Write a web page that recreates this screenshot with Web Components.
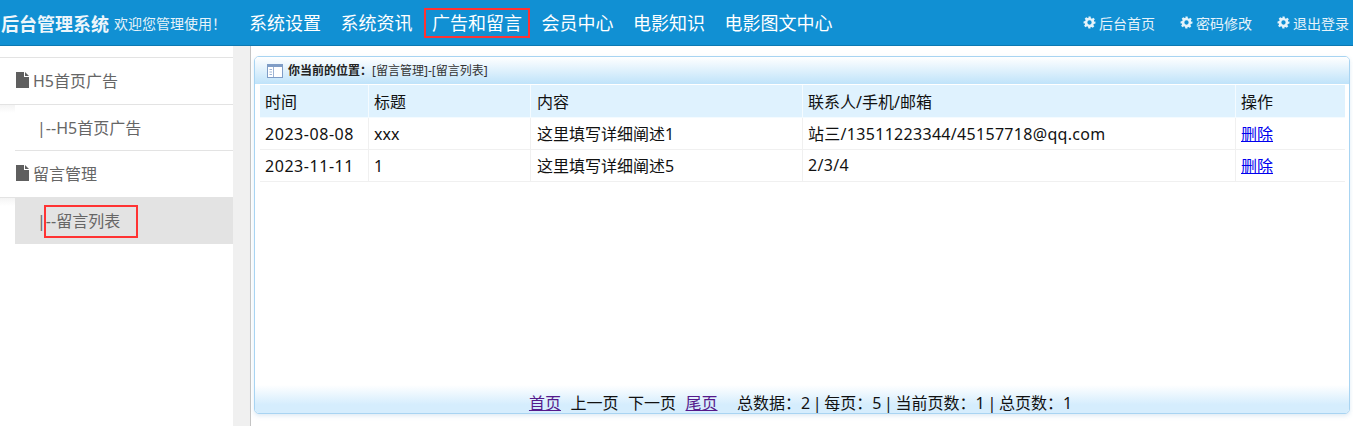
<!DOCTYPE html>
<html lang="zh">
<head>
<meta charset="utf-8">
<title>后台管理系统</title>
<style>
  html, body { margin: 0; height: 100%; }
  body { font-family: "Noto Sans", "Noto Sans CJK SC", sans-serif; overflow: hidden; }
  admin-app { height: 426px; }
</style>
</head>
<body>
<admin-app>
  <top-bar slot="top">
    <nav-link>系统设置</nav-link>
    <nav-link>系统资讯</nav-link>
    <nav-link marked>广告和留言</nav-link>
    <nav-link>会员中心</nav-link>
    <nav-link>电影知识</nav-link>
    <nav-link>电影图文中心</nav-link>
    <tool-link slot="tools">后台首页</tool-link>
    <tool-link slot="tools">密码修改</tool-link>
    <tool-link slot="tools">退出登录</tool-link>
  </top-bar>
  <side-menu slot="side">
    <menu-group>H5首页广告</menu-group>
    <menu-item>H5首页广告</menu-item>
    <menu-group>留言管理</menu-group>
    <menu-item active>留言列表</menu-item>
  </side-menu>
  <list-panel slot="main" where="[留言管理]-[留言列表]">
    <message-table></message-table>
    <page-bar slot="footer"></page-bar>
  </list-panel>
</admin-app>

<script>
class AdminApp extends HTMLElement {
  constructor() {
    super();
    this.attachShadow({ mode: "open" }).innerHTML = `
      <style>
        :host { display: grid; grid-template-rows: 46px 1fr; grid-template-columns: 233px 18px 1fr; background: #fff; }
        .top { grid-column: 1 / -1; }
        .gutter { background: #f0f0f0; border-right: 1px solid #c4c4c4; box-sizing: border-box; }
      </style>
      <div class="top"><slot name="top"></slot></div>
      <slot name="side"></slot>
      <div class="gutter"></div>
      <slot name="main"></slot>`;
  }
}

class TopBar extends HTMLElement {
  constructor() {
    super();
    this.attachShadow({ mode: "open" }).innerHTML = `
      <style>
        :host { display: flex; align-items: center; height: 46px; box-sizing: border-box; background: #1190d3; border-bottom: 1px solid #0d79b2; color: #fff; white-space: nowrap; }
        .brand { font-size: 18px; font-weight: 700; color: #eef6fb; width: 114px; padding-left: 1px; box-sizing: border-box; }
        .hello { font-size: 14px; color: #e6f3fa; width: 135px; }
        .nav { display: flex; gap: 19.500px; }
        .tools { display: flex; gap: 25px; margin-left: auto; margin-right: 5px; }
      </style>
      <span class="brand">后台管理系统</span>
      <span class="hello">欢迎您管理使用！</span>
      <div class="nav"><slot></slot></div>
      <div class="tools"><slot name="tools"></slot></div>`;
  }
}

class NavLink extends HTMLElement {
  constructor() {
    super();
    this.attachShadow({ mode: "open" }).innerHTML = `
      <style>
        :host { display: block; position: relative; font-size: 18px; line-height: 30px; color: #fff; }
        :host([marked])::after { content: ""; position: absolute; left: -8px; right: -8px; top: 0; bottom: 0; border: 2px solid #f33; }
      </style>
      <slot></slot>`;
  }
}

class ToolLink extends HTMLElement {
  constructor() {
    super();
    this.attachShadow({ mode: "open" }).innerHTML = `
      <style>
        :host { display: flex; align-items: center; gap: 3px; font-size: 14px; color: #e6f3fa; }
        svg { width: 13px; height: 13px; fill: #e6f3fa; }
      </style>
      <svg viewBox="0 0 24 24"><path fill-rule="evenodd" d="M10 1h4l.6 3.1 1.9.8 2.6-1.8 2.8 2.8-1.8 2.6.8 1.9L23 10v4l-3.1.6-.8 1.9 1.8 2.6-2.8 2.8-2.6-1.8-1.9.8L13.9 23h-4l-.6-3.1-1.9-.8-2.6 1.8-2.8-2.8 1.8-2.6-.8-1.9L1 14v-4l3.1-.6.8-1.9-1.8-2.6 2.8-2.8 2.6 1.8 1.9-.8zM12 8a4 4 0 1 0 0 8 4 4 0 0 0 0-8z"/></svg>
      <slot></slot>`;
  }
}

class SideMenu extends HTMLElement {
  constructor() {
    super();
    this.attachShadow({ mode: "open" }).innerHTML = `
      <style>
        :host { display: block; padding-top: 11px; background: #fff; }
        .list { border-top: 1px solid #e3e3e3; }
      </style>
      <div class="list"><slot></slot></div>`;
  }
}

class MenuGroup extends HTMLElement {
  constructor() {
    super();
    this.attachShadow({ mode: "open" }).innerHTML = `
      <style>
        :host { display: flex; align-items: center; gap: 3px; height: 46px; padding-left: 15px; border-bottom: 1px solid #e3e3e3; font-size: 16px; color: #666; }
        span { margin-top: -2px; }
        svg { width: 15px; height: 16px; fill: #5f5f5f; margin-top: -2px; }
      </style>
      <svg viewBox="0 0 15 16"><path d="M1 0h8v5h5v11H1zM10 0l4 4h-4z"/></svg>
      <span><slot></slot></span>`;
  }
}

class MenuItem extends HTMLElement {
  constructor() {
    super();
    this.attachShadow({ mode: "open" }).innerHTML = `
      <style>
        :host { display: flex; align-items: center; height: 44px; padding-bottom: 1px; margin-left: 15px; padding-left: 22px; border-bottom: 1px solid #e3e3e3; font-size: 16px; color: #666; position: relative; }
        :host::before { content: ""; position: absolute; left: -15px; top: 0; width: 15px; height: 8px; background: linear-gradient(#f4f4f4, #fff); }
        :host([active]) { background: #e3e3e3; }
        :host([active])::after { content: ""; position: absolute; left: 29px; top: 7px; width: 90px; height: 29px; border: 2px solid #f33; }
      </style>
      |--<slot></slot>`;
  }
}

class ListPanel extends HTMLElement {
  static get observedAttributes() { return ["where"]; }
  constructor() {
    super();
    this.attachShadow({ mode: "open" }).innerHTML = `
      <style>
        :host { display: block; padding: 10px 4px 12px 3px; height: 380px; box-sizing: border-box; }
        .box { height: 358px; box-sizing: border-box; display: flex; flex-direction: column; border: 1px solid #a8d4f2; border-radius: 5px; box-shadow: 0 2px 4px rgba(150,190,220,.3); background: #fff; }
        .head { display: flex; align-items: center; gap: 5px; height: 27px; padding-left: 12px; font-size: 12px; color: #333; background: linear-gradient(#fff, #bfe3fa); border-radius: 4px 4px 0 0; }
        .head b { font-weight: 700; color: #222; margin-right: -5px; margin-top: -1px; }
        .head span { margin-top: -1px; }
        .head svg { width: 16px; height: 14px; }
        .body { flex: 1; padding: 1px 4px 0 5px; }
        .foot { height: 28px; background: linear-gradient(#fff, #d5edfd 70%); border-radius: 0 0 4px 4px; }
      </style>
      <div class="box">
        <div class="head">
          <svg viewBox="0 0 16 14"><rect x=".5" y=".5" width="15" height="13" fill="#fff" stroke="#7f9dc6"/><rect x="1" y="1" width="14" height="2" fill="#7f9dc6"/><rect x="6" y="3" width="1" height="10" fill="#9db4d4"/><path d="M2.500 5.500h2.500M2.500 8h2.500M2.500 10.500h2.500" stroke="#9db4d4" fill="none"/></svg>
          <b>你当前的位置：</b><span id="where"></span>
        </div>
        <div class="body"><slot></slot></div>
        <div class="foot"><slot name="footer"></slot></div>
      </div>`;
  }
  attributeChangedCallback(name, oldValue, newValue) {
    this.shadowRoot.querySelector("#where").textContent = newValue;
  }
}

const rows = [
  ["2023-08-08", "xxx", "这里填写详细阐述1", "站三/13511223344/45157718@qq.com"],
  ["2023-11-11", "1", "这里填写详细阐述5", "2/3/4"]
];

class MessageTable extends HTMLElement {
  constructor() {
    super();
    this.attachShadow({ mode: "open" }).innerHTML = `
      <style>
        :host { display: block; font-size: 16px; color: #111; }
        .row { display: grid; grid-template-columns: 109px 162px 272px 433px 109px; height: 32px; border-bottom: 1px solid #f0f0f0; box-sizing: border-box; }
        .row.th { background: #dff2fe; border-bottom: 1px solid #f4fbff; height: 33px; }
        .row > * { display: flex; align-items: center; padding-left: 5px; border-right: 1px solid #f0f0f0; white-space: nowrap; }
        .row.th > * { border-right-color: #f4fbff; }
        .row > :nth-child(3) { padding-left: 6px; }
        .row > .op { border-right: 0; }
        .row:not(.th) > :nth-child(1) { letter-spacing: .55px; }
        .row:not(.th) > :nth-child(4) { letter-spacing: .3px; }
        .row:not(.th) > :nth-child(n+3) { padding-bottom: 1px; }
        a { color: #00e; text-decoration: underline; }
      </style>
      <div class="row th"><span>时间</span><span>标题</span><span>内容</span><span>联系人/手机/邮箱</span><span class="op">操作</span></div>
      ${rows.map(r => `<div class="row">${r.map(c => `<span>${c}</span>`).join("")}<span class="op"><a href="#">删除</a></span></div>`).join("")}`;
  }
}

class PageBar extends HTMLElement {
  constructor() {
    super();
    this.attachShadow({ mode: "open" }).innerHTML = `
      <style>
        :host { display: flex; justify-content: center; gap: 9.500px; height: 28px; padding: 6px 3px 0 0; box-sizing: border-box; align-items: center; font-size: 16px; color: #111; white-space: nowrap; }
        a { color: #551a8b; text-decoration: underline; }
        .sum { margin-left: 10px; word-spacing: -1.5px; }
      </style>
      <a href="#">首页</a><span>上一页</span><span>下一页</span><a href="#">尾页</a>
      <span class="sum">总数据：2 | 每页：5 | 当前页数：1 | 总页数：1</span>`;
  }
}

customElements.define("admin-app", AdminApp);
customElements.define("top-bar", TopBar);
customElements.define("nav-link", NavLink);
customElements.define("tool-link", ToolLink);
customElements.define("side-menu", SideMenu);
customElements.define("menu-group", MenuGroup);
customElements.define("menu-item", MenuItem);
customElements.define("list-panel", ListPanel);
customElements.define("message-table", MessageTable);
customElements.define("page-bar", PageBar);
</script>
</body>
</html>
